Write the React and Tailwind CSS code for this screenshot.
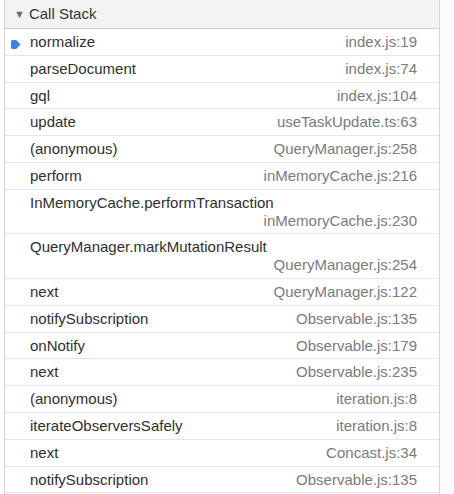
import React from 'react';

const frames = [
  { name: 'normalize', file: 'index.js:19', current: true },
  { name: 'parseDocument', file: 'index.js:74' },
  { name: 'gql', file: 'index.js:104' },
  { name: 'update', file: 'useTaskUpdate.ts:63' },
  { name: '(anonymous)', file: 'QueryManager.js:258' },
  { name: 'perform', file: 'inMemoryCache.js:216' },
  { name: 'InMemoryCache.performTransaction', file: 'inMemoryCache.js:230', wrap: true },
  { name: 'QueryManager.markMutationResult', file: 'QueryManager.js:254', wrap: true },
  { name: 'next', file: 'QueryManager.js:122' },
  { name: 'notifySubscription', file: 'Observable.js:135' },
  { name: 'onNotify', file: 'Observable.js:179' },
  { name: 'next', file: 'Observable.js:235' },
  { name: '(anonymous)', file: 'iteration.js:8' },
  { name: 'iterateObserversSafely', file: 'iteration.js:8' },
  { name: 'next', file: 'Concast.js:34' },
  { name: 'notifySubscription', file: 'Observable.js:135' },
];

const CurrentArrow = () => (
  <svg width="10" height="9" viewBox="0 0 10 9" className="absolute left-[6px] top-[11px]">
    <path d="M0 1.5 Q0 0 1.5 0 H5.2 L9.6 4.5 L5.2 9 H1.5 Q0 9 0 7.5 Z" fill="#3b82f0" />
  </svg>
);

const App = () => {
  return (
    <div className="w-[454px] h-[494px] overflow-hidden bg-white flex" style={{ fontFamily: '"Liberation Sans", Arial, sans-serif' }}>
      <div className="w-[4px]" />
      {/* Call stack panel */}
      <div className="w-[436px] border-l border-r border-[#d4d4d4] flex flex-col">
        <div className="h-[29px] shrink-0 bg-[#f3f3f3] border-b border-[#cfcfcf] flex items-center text-[15px] text-[#333]">
          <span className="ml-[9px] mr-[4px] text-[11px] text-[#6e6e6e]">▼</span>
          <span>Call Stack</span>
        </div>
        {frames.map((f, i) => (
          <div key={i} className="relative shrink-0 border-b border-[#e6e6e6] pl-[25px] pr-[22px] pt-[4px] pb-[4px] text-[15px] leading-[17.8px]">
            {f.current && <CurrentArrow />}
            {f.wrap ? (
              <>
                <div className="text-[#303030] whitespace-nowrap">{f.name}</div>
                <div className="text-right text-[#7b7b7b]">{f.file}</div>
              </>
            ) : (
              <div className="flex justify-between">
                <span className="text-[#303030] whitespace-nowrap">{f.name}</span>
                <span className="text-[#7b7b7b] whitespace-nowrap">{f.file}</span>
              </div>
            )}
          </div>
        ))}
      </div>
      <div className="flex-1 bg-[#fbfbfb]" />
    </div>
  );
};

export default App;
